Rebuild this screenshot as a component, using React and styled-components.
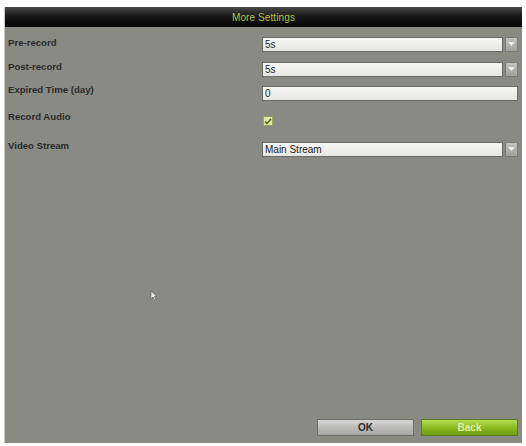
import React from 'react';
import styled, { createGlobalStyle } from 'styled-components';

const Global = createGlobalStyle`
  html, body {
    margin: 0;
    padding: 0;
    background: #ffffff;
    font-family: "Liberation Sans", Arial, sans-serif;
  }
`;

const Page = styled.div`
  width: 526px;
  height: 446px;
  padding: 7px 4px 3px 4px;
  box-sizing: border-box;
`;

const Panel = styled.div`
  position: relative;
  width: 518px;
  height: 436px;
  display: flex;
  flex-direction: column;
  background: #8a8a85;
  border-left: 1px solid #c8c8c4;
  box-sizing: border-box;
`;

const TitleBar = styled.div`
  height: 20px;
  display: flex;
  align-items: center;
  justify-content: center;
  background: linear-gradient(#4a4a4a, #181818 45%, #050505);
  color: #b4c440;
  font-size: 10px;
  letter-spacing: 0.1px;
`;

const Body = styled.div`
  flex: 1;
  display: flex;
  flex-direction: column;
  padding: 10px 4px 7px 3px;
`;

const Row = styled.div`
  display: grid;
  grid-template-columns: 254px 1fr;
  align-items: start;
  height: ${p => p.h}px;
`;

const Label = styled.div`
  font-size: 9.6px;
  font-weight: bold;
  color: #2a2a2a;
  margin-top: ${p => p.off || 0}px;
`;

const Field = styled.div`
  display: flex;
  gap: 2px;
  margin-top: ${p => p.off || 0}px;
`;

const Box = styled.div`
  flex: 1;
  height: 15px;
  box-sizing: border-box;
  border: 1px solid #6a6a68;
  background: linear-gradient(#f6f6f4, #e6e6e2);
  font-size: 10px;
  color: #1e1e1e;
  padding-left: 2px;
  line-height: 13px;
`;

const Arrow = styled.div`
  width: 13px;
  height: 15px;
  box-sizing: border-box;
  background: linear-gradient(#c2c2c0, #a0a09e);
  border: 1px solid #7a7a78;
  display: flex;
  align-items: center;
  justify-content: center;
`;

const Check = styled.div`
  width: 10px;
  height: 10px;
  margin-left: 1px;
  box-sizing: border-box;
  background: #dfe7a4;
  border: 1px solid #9aa060;
  display: flex;
  align-items: center;
  justify-content: center;
`;

const Spacer = styled.div`
  flex: 1;
`;

const Buttons = styled.div`
  display: flex;
  justify-content: flex-end;
  gap: 7px;
`;

const Button = styled.div`
  width: 97px;
  height: 17px;
  box-sizing: border-box;
  display: flex;
  align-items: center;
  justify-content: center;
  font-size: 10px;
  font-weight: bold;
  border: 1px solid ${p => (p.green ? '#5e7e1c' : '#6e6e6c')};
  background: ${p =>
    p.green
      ? 'linear-gradient(#b6dc52, #8cbc22 50%, #6e9a12)'
      : 'linear-gradient(#d6d6d4, #bcbcba 50%, #a6a6a4)'};
  color: ${p => (p.green ? '#dcefa8' : '#2a2a2a')};
`;

const Cursor = styled.svg`
  position: absolute;
  left: 145px;
  top: 283px;
`;

const Drop = () => (
  <Arrow>
    <svg width="7" height="5" viewBox="0 0 7 5">
      <path d="M0 0 L7 0 L3.5 4 Z" fill="#ececec" />
    </svg>
  </Arrow>
);

export default function App() {
  return (
    <Page>
      <Global />
      <Panel>
        <TitleBar>More Settings</TitleBar>
        <Body>
          <Row h={25}>
            <Label off={0}>Pre-record</Label>
            <Field>
              <Box>5s</Box>
              <Drop />
            </Field>
          </Row>
          <Row h={24}>
            <Label off={-1}>Post-record</Label>
            <Field>
              <Box>5s</Box>
              <Drop />
            </Field>
          </Row>
          <Row h={26}>
            <Label off={-2}>Expired Time (day)</Label>
            <Field>
              <Box>0</Box>
            </Field>
          </Row>
          <Row h={30}>
            <Label off={-1}>Record Audio</Label>
            <Field off={4}>
              <Check>
                <svg width="8" height="7" viewBox="0 0 8 7">
                  <path d="M1 3.5 L3 5.5 L7 1" stroke="#4a5a1a" strokeWidth="1.4" fill="none" />
                </svg>
              </Check>
            </Field>
          </Row>
          <Row h={15}>
            <Label off={-2}>Video Stream</Label>
            <Field>
              <Box>Main Stream</Box>
              <Drop />
            </Field>
          </Row>
          <Spacer />
          <Buttons>
            <Button>OK</Button>
            <Button green>Back</Button>
          </Buttons>
        </Body>
        <Cursor width="8" height="12" viewBox="0 0 8 12">
          <path d="M1 1 L1 9 L3 7 L5 11 L6 10.5 L4.5 6.5 L7 6.5 Z" fill="#e8e8e8" stroke="#555" strokeWidth="0.6" />
        </Cursor>
      </Panel>
    </Page>
  );
}
